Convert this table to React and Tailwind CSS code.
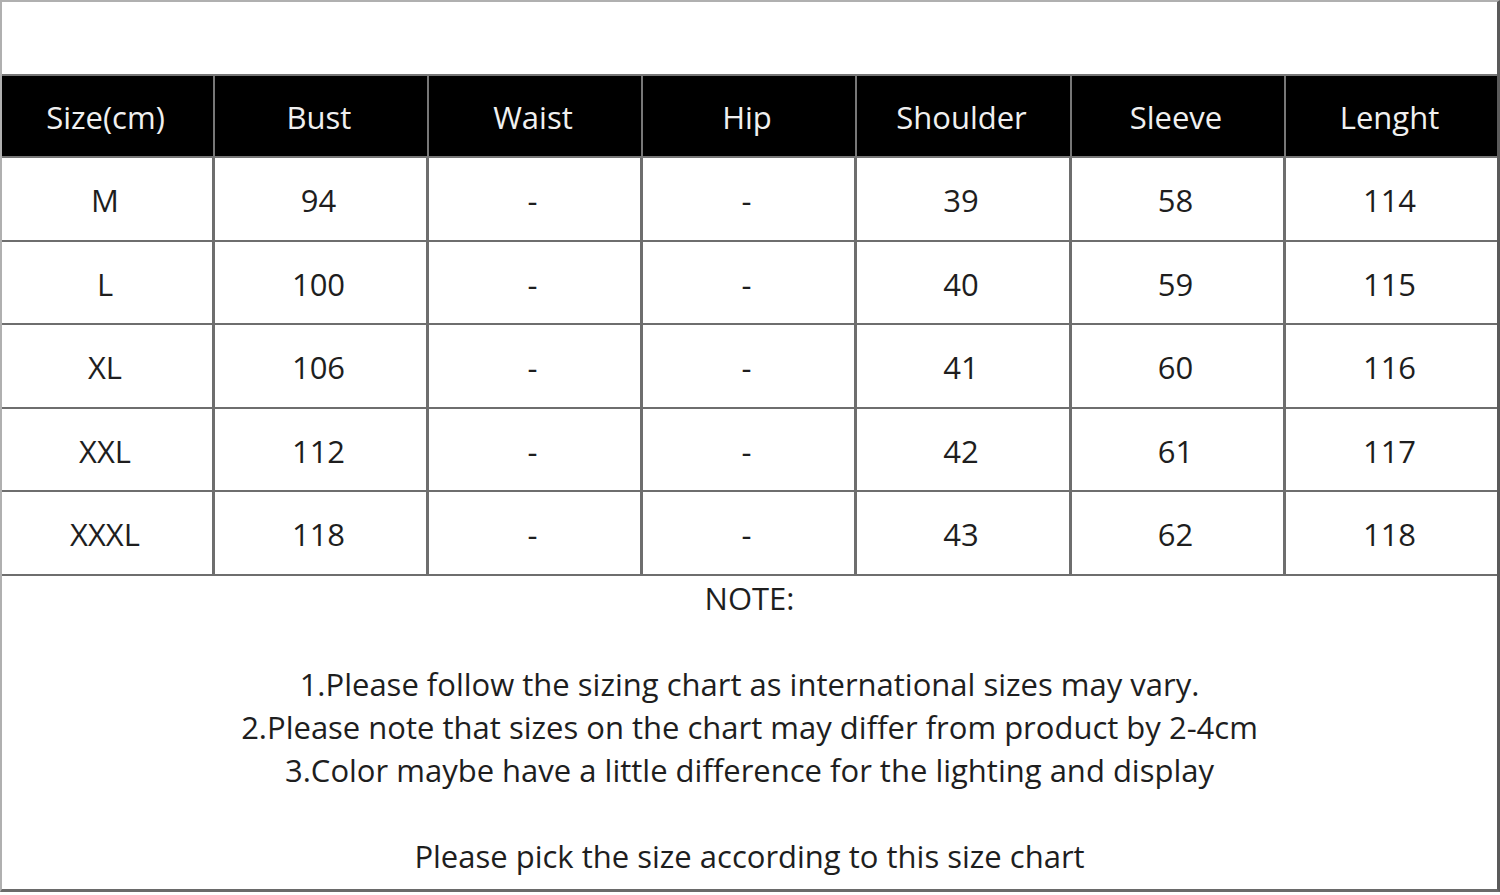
export default function App() {
  const headers = ["Size(cm)", "Bust", "Waist", "Hip", "Shoulder", "Sleeve", "Lenght"];
  const rows = [
    ["M", "94", "-", "-", "39", "58", "114"],
    ["L", "100", "-", "-", "40", "59", "115"],
    ["XL", "106", "-", "-", "41", "60", "116"],
    ["XXL", "112", "-", "-", "42", "61", "117"],
    ["XXXL", "118", "-", "-", "43", "62", "118"],
  ];
  const font = { fontFamily: '"Open Sans", "Noto Sans", sans-serif' };
  return (
    <div className="w-[1500px] h-[895px] bg-white overflow-hidden" style={font}>
      <div className="w-[1500px] h-[892px] border-t-2 border-l-2 border-t-[#b0b0b0] border-l-[#b0b0b0] border-r-[3px] border-r-[#5a5a5a] border-b-[3px] border-b-[#6a6a6a] flex flex-col">
        <div className="h-[72px] shrink-0" />
        <div className="grid grid-cols-[213px_214px_214px_214px_215px_214px_1fr] border-t-2 border-[#777] bg-black h-[84px] shrink-0">
          {headers.map((h, i) => (
            <div
              key={h}
              className={`flex items-center justify-center pt-[2px] pr-[4px] text-[31px] text-[#f0f0f0] border-b-2 border-[#777] ${i < 6 ? "border-r-2" : ""}`}
            >
              {h}
            </div>
          ))}
        </div>
        {rows.map((r, ri) => (
          <div key={ri} className="grid grid-cols-[213px_214px_214px_214px_215px_214px_1fr] h-[83.6px] shrink-0">
            {r.map((c, i) => (
              <div
                key={i}
                className={`flex items-center justify-center pt-[3px] pr-[4px] text-[31px] text-[#1e1e1e] border-b-2 border-[#6e6e6e] ${i < 6 ? "border-r-[3px]" : ""}`}
              >
                {c}
              </div>
            ))}
          </div>
        ))}
        <div className="flex flex-col items-center pt-[1px] text-[31px] leading-[43px] text-[#1e1e1e]">
          <div>NOTE:</div>
          <div className="h-[43px]" />
          <div>1.Please follow the sizing chart as international sizes may vary.</div>
          <div>2.Please note that sizes on the chart may differ from product by 2-4cm</div>
          <div>3.Color maybe have a little difference for the lighting and display</div>
          <div className="h-[43px]" />
          <div>Please pick the size according to this size chart</div>
        </div>
      </div>
    </div>
  );
}
